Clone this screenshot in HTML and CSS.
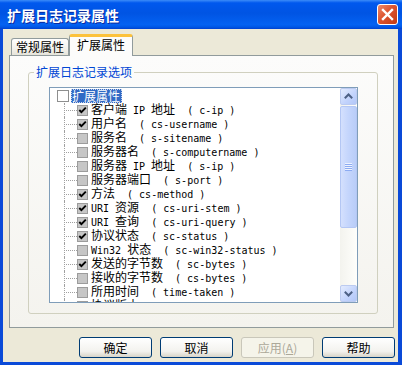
FILE: index.html
```html
<!DOCTYPE html>
<html lang="zh-CN">
<head>
    <meta charset="UTF-8">
    <title>扩展日志记录属性</title>
    <link rel="stylesheet" href="styles.css">
</head>
<body>
    <svg class="defs" aria-hidden="true">
        <symbol id="chk" viewBox="0 0 9 9">
            <path d="M1.3 4 L3.4 6.2 L7.8 1.6" fill="none" stroke="#000" stroke-width="1.9"/>
        </symbol>
    </svg>

    <div class="window">
        <div class="titlebar">
            <span class="title">扩展日志记录属性</span>
            <span class="close">
                <svg width="19" height="19" viewBox="0 0 19 19">
                    <path d="M5 5 L14 14 M14 5 L5 14" stroke="#fff" stroke-width="2.4" stroke-linecap="square"/>
                </svg>
            </span>
        </div>

        <div class="client">
            <div class="tabs">
                <div class="tab">常规属性</div>
                <div class="tab active">扩展属性</div>
            </div>

            <div class="panel">
                <fieldset class="group">
                    <legend>扩展日志记录选项</legend>
                    <div class="list">
                        <div class="tree">
                            <div class="row root">
                                <span class="cb white"></span>
                                <span class="sel">扩展属性</span>
                            </div>
                            <div class="row"><i class="line"></i><span class="cb"><svg><use href="#chk"/></svg></span><span class="txt">客户端<span class="m"> IP </span>地址<span class="m">  ( c-ip )</span></span></div>
                            <div class="row"><i class="line"></i><span class="cb"><svg><use href="#chk"/></svg></span><span class="txt">用户名<span class="m">  ( cs-username )</span></span></div>
                            <div class="row"><i class="line"></i><span class="cb"></span><span class="txt">服务名<span class="m">  ( s-sitename )</span></span></div>
                            <div class="row"><i class="line"></i><span class="cb"></span><span class="txt">服务器名<span class="m">  ( s-computername )</span></span></div>
                            <div class="row"><i class="line"></i><span class="cb"></span><span class="txt">服务器<span class="m"> IP </span>地址<span class="m">  ( s-ip )</span></span></div>
                            <div class="row"><i class="line"></i><span class="cb"></span><span class="txt">服务器端口<span class="m">  ( s-port )</span></span></div>
                            <div class="row"><i class="line"></i><span class="cb"><svg><use href="#chk"/></svg></span><span class="txt">方法<span class="m">  ( cs-method )</span></span></div>
                            <div class="row"><i class="line"></i><span class="cb"><svg><use href="#chk"/></svg></span><span class="txt"><span class="m">URI </span>资源<span class="m">  ( cs-uri-stem )</span></span></div>
                            <div class="row"><i class="line"></i><span class="cb"><svg><use href="#chk"/></svg></span><span class="txt"><span class="m">URI </span>查询<span class="m">  ( cs-uri-query )</span></span></div>
                            <div class="row"><i class="line"></i><span class="cb"><svg><use href="#chk"/></svg></span><span class="txt">协议状态<span class="m">  ( sc-status )</span></span></div>
                            <div class="row"><i class="line"></i><span class="cb"></span><span class="txt"><span class="m">Win32 </span>状态<span class="m">  ( sc-win32-status )</span></span></div>
                            <div class="row"><i class="line"></i><span class="cb"><svg><use href="#chk"/></svg></span><span class="txt">发送的字节数<span class="m">  ( sc-bytes )</span></span></div>
                            <div class="row"><i class="line"></i><span class="cb"></span><span class="txt">接收的字节数<span class="m">  ( cs-bytes )</span></span></div>
                            <div class="row"><i class="line"></i><span class="cb"></span><span class="txt">所用时间<span class="m">  ( time-taken )</span></span></div>
                            <div class="row"><i class="line"></i><span class="cb"></span><span class="txt">协议版本<span class="m">  ( cs-version )</span></span></div>
                        </div>
                        <div class="scrollbar">
                            <div class="sbtn">
                                <svg width="15" height="15" viewBox="0 0 15 15"><path d="M3.8 9.2 L7.5 5.5 L11.2 9.2" fill="none" stroke="#4d6185" stroke-width="2"/></svg>
                            </div>
                            <div class="track">
                                <div class="thumb"><span class="grip"></span></div>
                            </div>
                            <div class="sbtn">
                                <svg width="15" height="15" viewBox="0 0 15 15"><path d="M3.8 5.8 L7.5 9.5 L11.2 5.8" fill="none" stroke="#4d6185" stroke-width="2"/></svg>
                            </div>
                        </div>
                    </div>
                </fieldset>
            </div>

            <div class="buttons">
                <button>确定</button>
                <button>取消</button>
                <button disabled>应用(<u>A</u>)</button>
                <button>帮助</button>
            </div>
        </div>
    </div>
</body>
</html>
```

FILE: styles.css
```css
* {
    box-sizing: border-box;
}
body {
    margin: 0;
    background: #ffffff;
    font-family: "Noto Sans CJK SC", sans-serif;
    font-size: 12px;
    color: #000;
}
.defs {
    position: absolute;
    width: 0;
    height: 0;
}
.window {
    width: 402px;
    height: 365px;
    background: #0a4ad8;
    display: flex;
    flex-direction: column;
}
.titlebar {
    height: 29px;
    display: flex;
    align-items: center;
    padding: 0 4px 0 7px;
    background: linear-gradient(180deg, #3c8cf8, #0058ee 10%, #0054e3 45%, #0462f2 85%, #0058e6 93%, #0041d0);
}
.title {
    color: #ffffff;
    font-weight: bold;
    font-size: 14px;
    line-height: 16px;
    text-shadow: 1px 1px #0c2aa0;
}
.close {
    margin-left: auto;
    width: 21px;
    height: 21px;
    border: 1px solid #ffffff;
    border-radius: 3px;
    background: linear-gradient(135deg, #ee8a6a, #dc5430 45%, #c23a12);
    display: flex;
    align-items: center;
    justify-content: center;
}
.client {
    flex: 1;
    margin: 0 4px 3px 3px;
    background: #ece9d8;
    padding-top: 5px;
    display: flex;
    flex-direction: column;
}
.tabs {
    display: flex;
    align-items: flex-end;
    height: 21px;
    margin-left: 8px;
}
.tab {
    width: 58px;
    height: 17px;
    border: 1px solid #919b9c;
    border-bottom: none;
    border-radius: 3px 3px 0 0;
    background: linear-gradient(#ffffff, #f3f2ec 60%, #e6e4da);
    text-align: center;
    line-height: 16px;
}
.tab.active {
    width: 64px;
    height: 22px;
    margin-bottom: -1px;
    position: relative;
    z-index: 1;
    border-top: 3px solid #fcc23c;
    background: #fcfcfb;
    line-height: 15px;
}
.panel {
    height: 273px;
    margin: 0 4px 0 6px;
    border: 1px solid #919b9c;
    background: linear-gradient(#fcfcfb, #f4f3ee);
    padding-top: 9px;
}
.group {
    margin: 0 15px 0 18px;
    padding: 0;
    border: 1px solid #d0d0bf;
    border-radius: 3px;
}
.group legend {
    margin-left: 5px;
    padding: 0 2px;
    color: #0046d5;
    line-height: 14px;
}
.list {
    height: 216px;
    margin: 8px 19px 10px 20px;
    border: 1px solid #7f9db9;
    background: #ffffff;
    display: flex;
}
.tree {
    flex: 1;
    overflow: hidden;
    padding-top: 1px;
}
.row {
    height: 14px;
    display: flex;
    align-items: center;
    padding-left: 14px;
    white-space: pre;
    line-height: 14px;
}
.row.root {
    padding-left: 7px;
}
.line {
    align-self: stretch;
    width: 13px;
    border-left: 1px dotted #a0a0a0;
    background: repeating-linear-gradient(90deg, #a0a0a0 0 1px, transparent 1px 2px) 1px 7px / 100% 1px no-repeat;
}
.cb {
    width: 11px;
    height: 11px;
    margin-right: 3px;
    border: 1px solid #9c9c9c;
    background: #c6c6c6;
    display: flex;
}
.cb svg {
    width: 9px;
    height: 9px;
}
.cb.white {
    width: 12px;
    height: 12px;
    margin-right: 2px;
    border-color: #8e8f8f;
    background: #ffffff;
}
.sel {
    padding: 0 2px 0 1px;
    background: #316ac5;
    color: #ffffff;
    outline: 1px dotted #c8d4ec;
    outline-offset: -1px;
}
.m {
    font-family: "DejaVu Sans Mono", monospace;
    font-size: 10px;
}
.scrollbar {
    width: 17px;
    display: flex;
    flex-direction: column;
    background: linear-gradient(90deg, #f3f3ee, #fefefb);
}
.sbtn {
    height: 17px;
    border: 1px solid #bccbf0;
    border-radius: 2px;
    background: linear-gradient(135deg, #e4ecfe, #c2d3fc 60%, #b2c7f8);
    display: flex;
    align-items: center;
    justify-content: center;
}
.track {
    flex: 1;
    padding-top: 1px;
}
.thumb {
    height: 122px;
    border: 1px solid #b4c7f4;
    border-radius: 2px;
    background: linear-gradient(90deg, #d4e0fd, #c4d5fc 50%, #b9cdf8);
    display: flex;
    align-items: center;
    justify-content: center;
}
.grip {
    width: 7px;
    height: 8px;
    background: repeating-linear-gradient(#eef3fe 0 1px, #8cabf2 1px 2px);
}
.buttons {
    display: flex;
    justify-content: flex-end;
    gap: 8px;
    margin-top: 9px;
    padding-right: 3px;
}
button {
    width: 73px;
    height: 21px;
    padding: 0;
    border: 1px solid #003c74;
    border-radius: 3px;
    background: linear-gradient(#ffffff, #f3f2ee 70%, #d8d4c8);
    font-family: "Noto Sans CJK SC", sans-serif;
    font-size: 12px;
    color: #000;
}
button:disabled {
    border-color: #c9c7ba;
    background: #f5f4ea;
    color: #aca899;
}
button u {
    text-decoration: underline;
}
```
